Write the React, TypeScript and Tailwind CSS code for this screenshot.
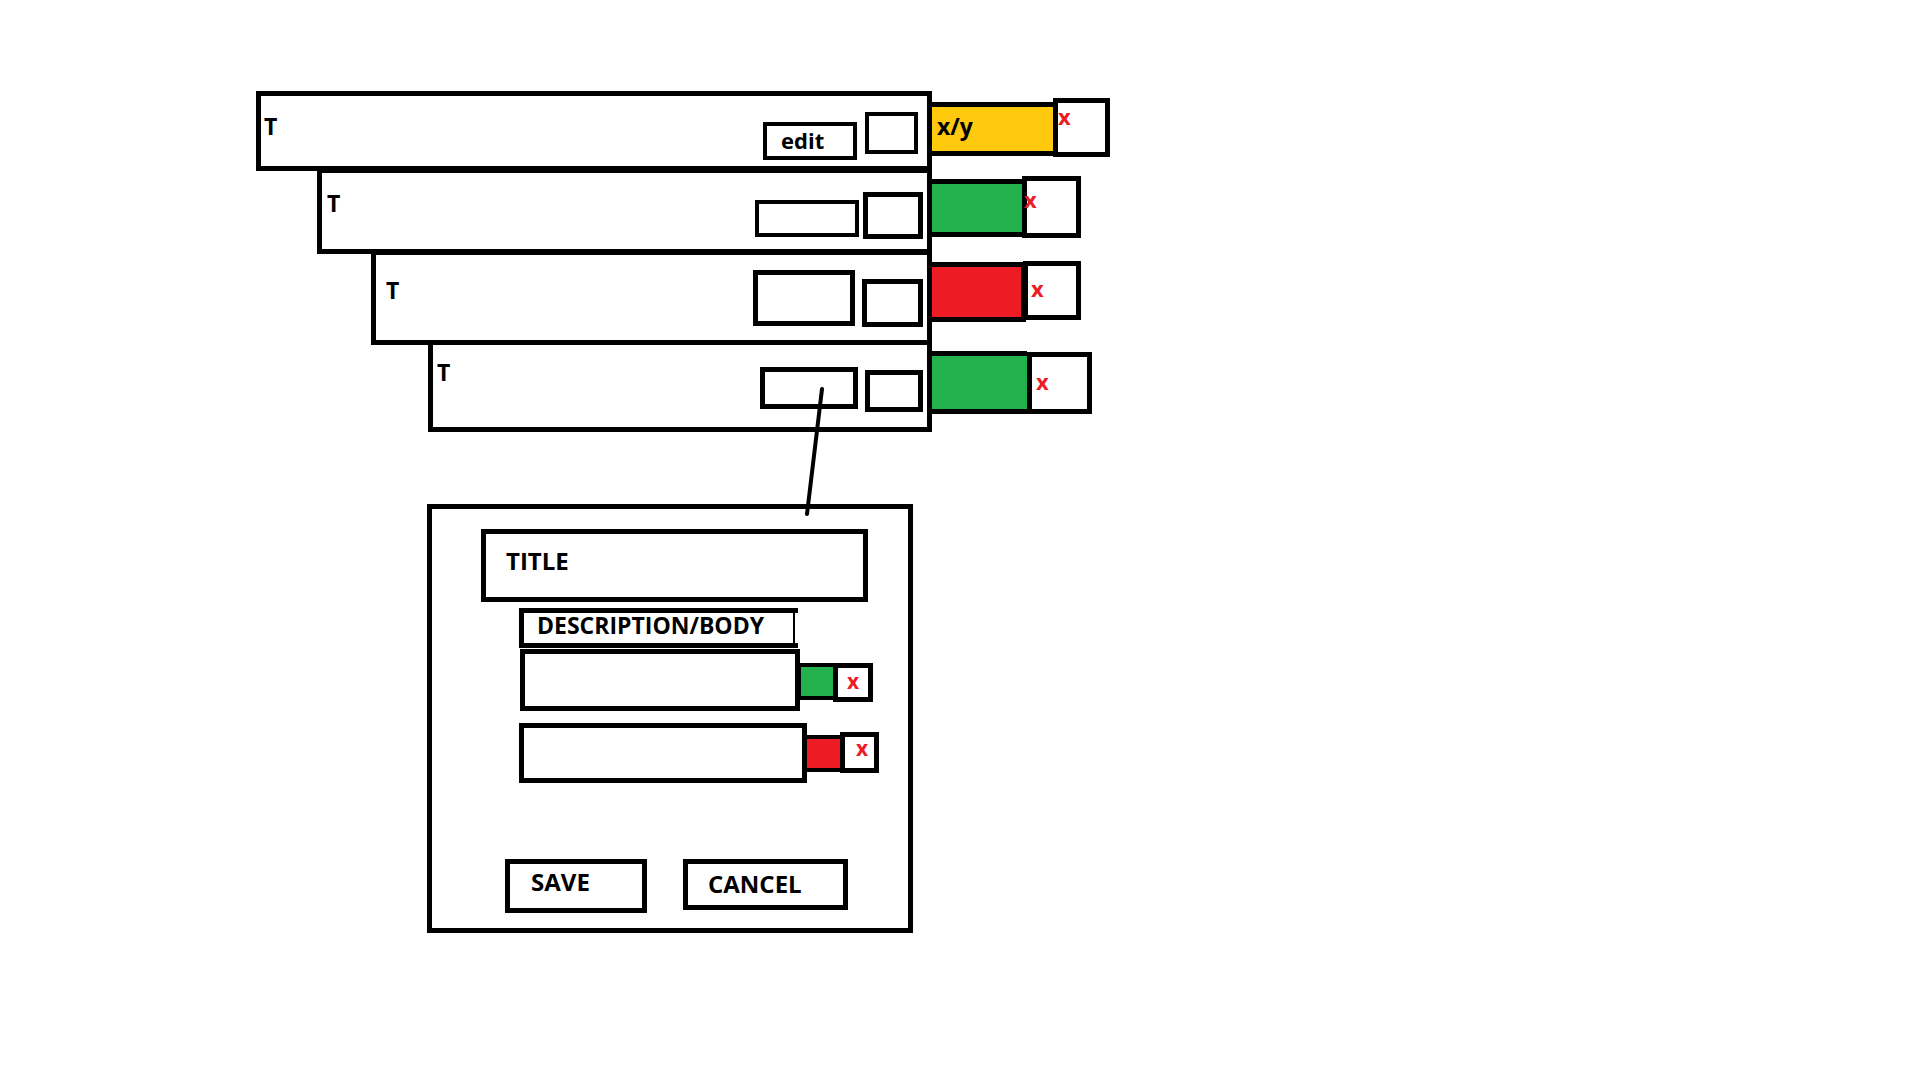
import React from 'react';

const App: React.FC = () => {
  return (
    <div className="relative w-[1920px] h-[1080px] bg-white text-black font-['Open_Sans',sans-serif] font-bold leading-none">
      <div className="pt-[91px] pl-[256px] flex flex-col">
        {/* row 1 */}
        <div className="flex items-start">
          <div className="flex items-start w-[676px] h-[80px] border-[5px] border-black">
            <span className="ml-[3px] mt-[19px] text-[23px]">T</span>
            <div className="ml-auto mt-[26px] w-[94px] h-[38px] border-4 border-black pl-[14px] pt-[3px] text-[22px]">edit</div>
            <div className="ml-[8px] mr-[9px] mt-[16px] w-[53px] h-[42px] border-4 border-black" />
          </div>
          <div className="mt-[11px] w-[121px] h-[54px] border-y-[5px] border-black bg-[#ffc90e] pl-[5px] pt-[8px] text-[23px]">x/y</div>
          <div className="mt-[7px] w-[57px] h-[59px] border-[5px] border-black pt-[2px] text-[22px] text-[#ed1c24]">x</div>
        </div>

        {/* row 2 */}
        <div className="flex items-start ml-[61px] -mt-[3px]">
          <div className="flex items-start w-[615px] h-[86px] border-[5px] border-black">
            <span className="ml-[5px] mt-[19px] text-[23px]">T</span>
            <div className="ml-auto mt-[27px] w-[104px] h-[37px] border-4 border-black" />
            <div className="ml-[4px] mr-[4px] mt-[19px] w-[60px] h-[47px] border-[5px] border-black" />
          </div>
          <div className="mt-[11px] w-[91px] h-[58px] border-y-[5px] border-black bg-[#22b14c]" />
          <div className="mt-[8px] w-[59px] h-[62px] border-[5px] border-black -ml-[1px] pt-[7px] text-[22px] text-[#ed1c24]">
            <span className="-ml-[3px]">x</span>
          </div>
        </div>

        {/* row 3 */}
        <div className="flex items-start ml-[115px] -mt-[4px]">
          <div className="flex items-start w-[561px] h-[95px] border-[5px] border-black">
            <span className="ml-[10px] mt-[24px] text-[23px]">T</span>
            <div className="ml-auto mt-[15px] w-[102px] h-[56px] border-[5px] border-black" />
            <div className="ml-[7px] mr-[4px] mt-[24px] w-[61px] h-[48px] border-[5px] border-black" />
          </div>
          <div className="mt-[12px] w-[94px] h-[60px] border-y-[5px] border-r-[5px] border-black bg-[#ed1c24]" />
          <div className="mt-[11px] -ml-[3px] w-[58px] h-[59px] border-[5px] border-black pl-[3px] pt-[11px] text-[22px] text-[#ed1c24]">x</div>
        </div>

        {/* row 4 */}
        <div className="flex items-start ml-[172px] -mt-[5px]">
          <div className="flex items-start w-[504px] h-[92px] border-[5px] border-black">
            <span className="ml-[4px] mt-[16px] text-[23px]">T</span>
            <div className="ml-auto mt-[22px] w-[98px] h-[42px] border-[5px] border-black" />
            <div className="ml-[7px] mr-[4px] mt-[25px] w-[58px] h-[42px] border-[5px] border-black" />
          </div>
          <div className="mt-[11px] w-[95px] h-[63px] border-y-[5px] border-black bg-[#22b14c]" />
          <div className="mt-[12px] w-[65px] h-[62px] border-[5px] border-black pl-[4px] pt-[13px] text-[22px] text-[#ed1c24]">x</div>
        </div>

        {/* edit dialog */}
        <div className="ml-[171px] mt-[72px] w-[486px] h-[429px] border-[5px] border-black flex flex-col items-start">
          <div className="ml-[49px] mt-[20px] w-[387px] h-[73px] border-[5px] border-black pl-[20px] pt-[15px] text-[24px]">TITLE</div>

          <div className="relative ml-[87px] mt-[6px] w-[279px] h-[40px] border-[5px] border-r-0 border-black pl-[13px] pt-[1px] text-[23px]">
            DESCRIPTION/BODY
            <span className="absolute right-[3px] top-0 bottom-0 w-[2px] bg-black" />
          </div>

          <div className="flex items-start ml-[88px] mt-[1px]">
            <div className="w-[280px] h-[62px] border-[5px] border-black" />
            <div className="mt-[14px] w-[33px] h-[37px] border-y-4 border-l border-black bg-[#22b14c]" />
            <div className="mt-[14px] w-[40px] h-[39px] border-[5px] border-black pl-[9px] pt-[3px] text-[21px] text-[#ed1c24]">x</div>
          </div>

          <div className="flex items-start ml-[87px] mt-[12px]">
            <div className="w-[288px] h-[60px] border-[5px] border-black" />
            <div className="mt-[12px] w-[33px] h-[37px] border-y-4 border-black bg-[#ed1c24]" />
            <div className="mt-[9px] w-[39px] h-[41px] border-[5px] border-black pl-[11px] pt-[1px] text-[21px] text-[#ed1c24]">x</div>
          </div>

          <div className="flex items-start ml-[73px] mt-[76px]">
            <div className="w-[142px] h-[54px] border-[5px] border-black pl-[21px] pt-[6px] text-[24px]">SAVE</div>
            <div className="ml-[36px] w-[165px] h-[51px] border-[5px] border-black pl-[20px] pt-[8px] text-[24px]">CANCEL</div>
          </div>
        </div>
      </div>

      {/* connector from row 4 to the dialog */}
      <svg className="absolute left-0 top-0 pointer-events-none" width="1920" height="1080">
        <line x1="822" y1="389" x2="807" y2="514" stroke="black" strokeWidth="4" strokeLinecap="round" />
      </svg>
    </div>
  );
};

export default App;
